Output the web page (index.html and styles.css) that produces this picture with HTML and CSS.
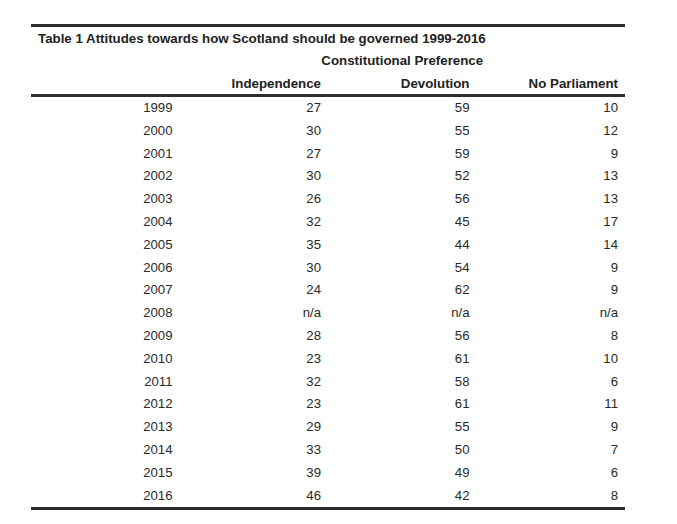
FILE: index.html
```html
<!DOCTYPE html>
<html lang="en">
<head>
<meta charset="utf-8">
<title>Table 1</title>
<link rel="stylesheet" href="styles.css">
</head>
<body>
<table class="data">
  <colgroup><col class="c"><col class="c"><col class="c"><col class="c"></colgroup>
  <thead>
    <tr class="title-row"><th colspan="4" class="title">Table 1 Attitudes towards how Scotland should be governed 1999-2016</th></tr>
    <tr class="group-row"><th></th><th colspan="3" class="group">Constitutional Preference</th></tr>
    <tr class="head-row"><th></th><th>Independence</th><th>Devolution</th><th>No Parliament</th></tr>
  </thead>
  <tbody>
    <tr><td>1999</td><td>27</td><td>59</td><td>10</td></tr>
    <tr><td>2000</td><td>30</td><td>55</td><td>12</td></tr>
    <tr><td>2001</td><td>27</td><td>59</td><td>9</td></tr>
    <tr><td>2002</td><td>30</td><td>52</td><td>13</td></tr>
    <tr><td>2003</td><td>26</td><td>56</td><td>13</td></tr>
    <tr><td>2004</td><td>32</td><td>45</td><td>17</td></tr>
    <tr><td>2005</td><td>35</td><td>44</td><td>14</td></tr>
    <tr><td>2006</td><td>30</td><td>54</td><td>9</td></tr>
    <tr><td>2007</td><td>24</td><td>62</td><td>9</td></tr>
    <tr><td>2008</td><td>n/a</td><td>n/a</td><td>n/a</td></tr>
    <tr><td>2009</td><td>28</td><td>56</td><td>8</td></tr>
    <tr><td>2010</td><td>23</td><td>61</td><td>10</td></tr>
    <tr><td>2011</td><td>32</td><td>58</td><td>6</td></tr>
    <tr><td>2012</td><td>23</td><td>61</td><td>11</td></tr>
    <tr><td>2013</td><td>29</td><td>55</td><td>9</td></tr>
    <tr><td>2014</td><td>33</td><td>50</td><td>7</td></tr>
    <tr><td>2015</td><td>39</td><td>49</td><td>6</td></tr>
    <tr><td>2016</td><td>46</td><td>42</td><td>8</td></tr>
  </tbody>
</table>
</body>
</html>
```
FILE: styles.css
```css
html, body {
  margin: 0;
  padding: 0;
  background: #ffffff;
}
body {
  font-family: "Liberation Sans", Arial, sans-serif;
  font-size: 13px;
  color: #2a2a2a;
}
.data {
  margin: 24px 0 0 31px;
  width: 594px;
  table-layout: fixed;
  border-collapse: collapse;
  border-top: 3px solid #2e2e2e;
  border-bottom: 3px solid #2e2e2e;
}
.data .c {
  width: 148.5px;
}
.data th,
.data td {
  padding: 0 7px 0 0;
  text-align: right;
  white-space: nowrap;
  overflow: visible;
}
.data th {
  font-weight: bold;
  font-size: 13.3px;
  color: #222222;
}
.title-row th {
  height: 22px;
  text-align: left;
  padding-left: 7px;
  padding-top: 0;
}
.group-row th {
  height: 22px;
}
.group-row .group {
  text-align: center;
  padding-right: 0;
}
.head-row th {
  height: 22px;
  border-bottom: 3px solid #2e2e2e;
  padding-top: 1px;
}
.data tbody td {
  height: 22.8px;
  line-height: 22.8px;
  font-size: 13.2px;
}
```
